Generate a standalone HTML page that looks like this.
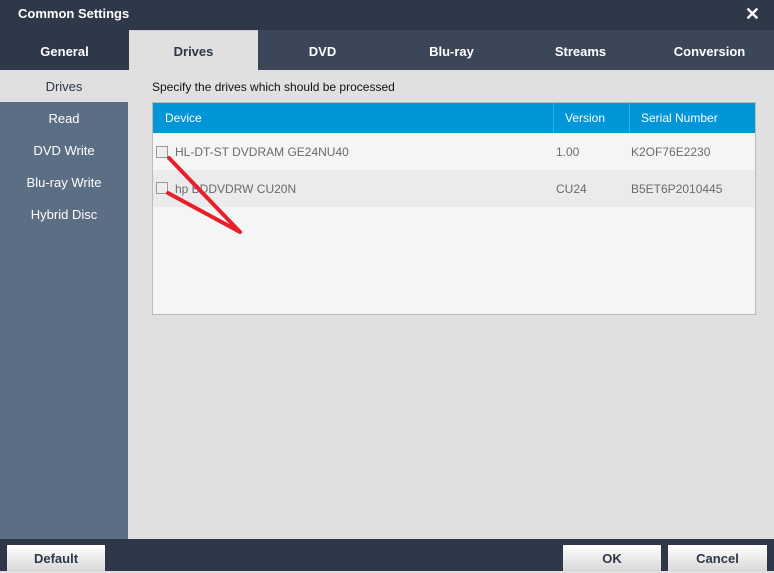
<!DOCTYPE html><html><head><style>
body{margin:0;width:774px;height:571px;position:relative;overflow:hidden;font-family:"Liberation Sans",sans-serif;background:#e0e0e0}
div{position:absolute;box-sizing:border-box}
.t{color:#fff;font-weight:bold;font-size:13px;text-align:center;line-height:43px;top:30px;height:40px}
.s{left:0;width:128px;text-align:center;color:#fff;font-size:13px;height:32px;line-height:34px}
.b{background:linear-gradient(#fff,#d8d8d8);font-weight:bold;font-size:13px;text-align:center;line-height:28px;color:#2d3748;top:545px;height:26px}
.c{width:12px;height:12px;border:1px solid #999;background:#eee;left:156px}
.r{font-size:12px;color:#6a6a6a;line-height:39px;height:37px}
</style></head><body>
<div style="left:0;top:0;width:774px;height:30px;background:#2e3849;color:#fff;font-weight:bold;font-size:13px;line-height:28px;padding-left:18px">Common Settings<span style="position:absolute;right:14px;top:0;font-size:18px">✕</span></div>
<div style="left:0;top:30px;width:774px;height:40px;background:#3b4658"></div>
<div class="t" style="left:0;width:129px;background:#2e3849">General</div>
<div class="t" style="left:129px;width:129px;background:#e0e0e0;color:#2d3748;line-height:41px;border-top:1px solid #ccc">Drives</div>
<div class="t" style="left:258px;width:129px">DVD</div>
<div class="t" style="left:387px;width:129px">Blu-ray</div>
<div class="t" style="left:516px;width:129px">Streams</div>
<div class="t" style="left:645px;width:129px">Conversion</div>
<div style="left:0;top:70px;width:128px;height:469px;background:#5b6e83"></div>
<div class="s" style="top:70px;background:#e0e0e0;color:#2d3748">Drives</div>
<div class="s" style="top:102px">Read</div>
<div class="s" style="top:134px">DVD Write</div>
<div class="s" style="top:166px">Blu-ray Write</div>
<div class="s" style="top:198px">Hybrid Disc</div>
<div style="left:152px;top:80px;font-size:12px;color:#111">Specify the drives which should be processed</div>
<div style="left:152px;top:102px;width:604px;height:213px;border:1px solid #bbb;background:#f4f5f5"></div>
<div style="left:153px;top:103px;width:602px;height:30px;background:#0096d8;color:#fff;font-size:12px;line-height:30px"><span style="position:absolute;left:12px">Device</span><span style="position:absolute;left:400px;border-left:1px solid #3aaee4;padding-left:11px">Version</span><span style="position:absolute;left:476px;border-left:1px solid #3aaee4;padding-left:11px">Serial Number</span></div>
<div style="left:153px;top:170px;width:602px;height:37px;background:#e9ebec"></div>
<div class="r" style="left:175px;top:133px">HL-DT-ST DVDRAM GE24NU40</div><div class="r" style="left:556px;top:133px">1.00</div><div class="r" style="left:631px;top:133px">K2OF76E2230</div>
<div class="r" style="left:175px;top:170px">hp BDDVDRW CU20N</div><div class="r" style="left:556px;top:170px">CU24</div><div class="r" style="left:631px;top:170px">B5ET6P2010445</div>
<div class="c" style="top:146px"></div><div class="c" style="top:182px"></div>
<svg style="position:absolute;left:0;top:0" width="774" height="571"><path d="M169 158 L240 232 M168 193 L240 232" stroke="#e8202a" stroke-width="4" stroke-linecap="round" fill="none"/></svg>
<div style="left:0;top:539px;width:774px;height:32px;background:#2d3748"></div>
<div class="b" style="left:7px;width:98px">Default</div>
<div class="b" style="left:563px;width:98px">OK</div>
<div class="b" style="left:668px;width:99px">Cancel</div>
</body></html>
